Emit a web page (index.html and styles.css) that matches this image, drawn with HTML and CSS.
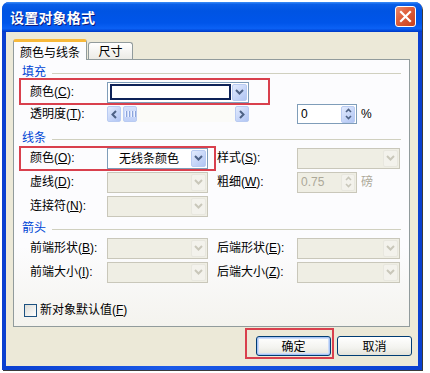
FILE: index.html
```html
<!DOCTYPE html>
<html lang="zh">
<head>
<meta charset="utf-8">
<title>设置对象格式</title>
<link rel="stylesheet" href="styles.css">
</head>
<body>
<div class="stage">
  <div class="window">
    <div class="titlebar">
      <span class="title">设置对象格式</span>
      <div class="close">
        <svg width="13" height="13" viewBox="0 0 13 13"><path d="M2 2 L11 11 M11 2 L2 11" stroke="#fff" stroke-width="2.2" stroke-linecap="square"/></svg>
      </div>
    </div>
    <div class="client">
      <div class="tabs">
        <div class="tab active">颜色与线条</div>
        <div class="tab">尺寸</div>
      </div>
      <div class="panel">
        <div class="group"><span>填充</span></div>
        <div class="row">
          <span class="lbl">颜色(<u>C</u>):</span>
          <div class="combo wide">
            <div class="colorbox"></div>
            <div class="dd"><svg width="9" height="6" viewBox="0 0 9 6"><path d="M1 1 L4.5 4.5 L8 1" fill="none" stroke="#4d6185" stroke-width="2"/></svg></div>
          </div>
        </div>
        <div class="row r20">
          <span class="lbl">透明度(<u>T</u>):</span>
          <div class="hscroll">
            <div class="sbtn"><svg width="6" height="9" viewBox="0 0 6 9"><path d="M5 1 L1.5 4.5 L5 8" fill="none" stroke="#4d6185" stroke-width="2"/></svg></div>
            <div class="thumb"><i></i><i></i><i></i><i></i></div>
            <div class="sbtn end"><svg width="6" height="9" viewBox="0 0 6 9"><path d="M1 1 L4.5 4.5 L1 8" fill="none" stroke="#4d6185" stroke-width="2"/></svg></div>
          </div>
          <div class="spin">
            <span class="val">0</span>
            <div class="spinbtns">
              <div class="sb"><svg width="7" height="5" viewBox="0 0 7 5"><path d="M1 4 L3.5 1.5 L6 4" fill="none" stroke="#4d6185" stroke-width="1.6"/></svg></div>
              <div class="sb"><svg width="7" height="5" viewBox="0 0 7 5"><path d="M1 1 L3.5 3.5 L6 1" fill="none" stroke="#4d6185" stroke-width="1.6"/></svg></div>
            </div>
          </div>
          <span class="unit">%</span>
        </div>

        <div class="group g2"><span>线条</span></div>
        <div class="row">
          <span class="lbl">颜色(<u>O</u>):</span>
          <div class="combo">
            <span class="ctext">无线条颜色</span>
            <div class="dd"><svg width="9" height="6" viewBox="0 0 9 6"><path d="M1 1 L4.5 4.5 L8 1" fill="none" stroke="#4d6185" stroke-width="2"/></svg></div>
          </div>
          <span class="lbl2">样式(<u>S</u>):</span>
          <div class="combo dis c2">
            <div class="dd"><svg width="9" height="6" viewBox="0 0 9 6"><path d="M1 1 L4.5 4.5 L8 1" fill="none" stroke="#c9c7ba" stroke-width="2"/></svg></div>
          </div>
        </div>
        <div class="row">
          <span class="lbl">虚线(<u>D</u>):</span>
          <div class="combo dis">
            <div class="dd"><svg width="9" height="6" viewBox="0 0 9 6"><path d="M1 1 L4.5 4.5 L8 1" fill="none" stroke="#c9c7ba" stroke-width="2"/></svg></div>
          </div>
          <span class="lbl2">粗细(<u>W</u>):</span>
          <div class="spin dis">
            <span class="val">0.75</span>
            <div class="spinbtns">
              <div class="sb"><svg width="7" height="5" viewBox="0 0 7 5"><path d="M1 4 L3.5 1.5 L6 4" fill="none" stroke="#c9c7ba" stroke-width="1.6"/></svg></div>
              <div class="sb"><svg width="7" height="5" viewBox="0 0 7 5"><path d="M1 1 L3.5 3.5 L6 1" fill="none" stroke="#c9c7ba" stroke-width="1.6"/></svg></div>
            </div>
          </div>
          <span class="unit dim">磅</span>
        </div>
        <div class="row">
          <span class="lbl">连接符(<u>N</u>):</span>
          <div class="combo dis">
            <div class="dd"><svg width="9" height="6" viewBox="0 0 9 6"><path d="M1 1 L4.5 4.5 L8 1" fill="none" stroke="#c9c7ba" stroke-width="2"/></svg></div>
          </div>
        </div>

        <div class="group g3"><span>箭头</span></div>
        <div class="row">
          <span class="lbl">前端形状(<u>B</u>):</span>
          <div class="combo dis">
            <div class="dd"><svg width="9" height="6" viewBox="0 0 9 6"><path d="M1 1 L4.5 4.5 L8 1" fill="none" stroke="#c9c7ba" stroke-width="2"/></svg></div>
          </div>
          <span class="lbl2">后端形状(<u>E</u>):</span>
          <div class="combo dis c2">
            <div class="dd"><svg width="9" height="6" viewBox="0 0 9 6"><path d="M1 1 L4.5 4.5 L8 1" fill="none" stroke="#c9c7ba" stroke-width="2"/></svg></div>
          </div>
        </div>
        <div class="row">
          <span class="lbl">前端大小(<u>I</u>):</span>
          <div class="combo dis">
            <div class="dd"><svg width="9" height="6" viewBox="0 0 9 6"><path d="M1 1 L4.5 4.5 L8 1" fill="none" stroke="#c9c7ba" stroke-width="2"/></svg></div>
          </div>
          <span class="lbl2">后端大小(<u>Z</u>):</span>
          <div class="combo dis c2">
            <div class="dd"><svg width="9" height="6" viewBox="0 0 9 6"><path d="M1 1 L4.5 4.5 L8 1" fill="none" stroke="#c9c7ba" stroke-width="2"/></svg></div>
          </div>
        </div>

        <div class="check">
          <span class="box"></span>
          <span>新对象默认值(<u>F</u>)</span>
        </div>
      </div>
      <div class="buttons">
        <div class="btn default">确定</div>
        <div class="btn">取消</div>
      </div>
    </div>
  </div>
  <div class="mark m1"></div>
  <div class="mark m2"></div>
  <div class="mark m3"></div>
</div>
</body>
</html>
```
FILE: styles.css
```css
html, body {
  margin: 0;
  padding: 0;
  background: #ffffff;
}
body {
  font-family: "Liberation Sans", "Noto Sans CJK SC", sans-serif;
  font-size: 12px;
  line-height: 14px;
  color: #000;
}
.stage {
  position: relative;
  width: 430px;
  height: 373px;
  overflow: hidden;
}
.window {
  margin: 2px 0 0 2px;
  width: 420px;
  height: 368px;
  box-sizing: border-box;
  border-radius: 7px 7px 0 0;
  background: #0842d4;
  box-shadow: 1px 1px 0 #3a3a3a;
  display: flex;
  flex-direction: column;
  padding: 0 4px 4px 4px;
  background: linear-gradient(to right, #0a3fd0, #1b5ae8 40%, #0a3fd0);
}
.titlebar {
  height: 30px;
  margin: 0 -4px;
  border-radius: 7px 7px 0 0;
  background: linear-gradient(#3c8ef8 0%, #0a5ee8 8%, #0054e3 30%, #0055ea 70%, #0b61f5 88%, #0046d8 96%, #0037c4 100%);
  display: flex;
  align-items: center;
  padding: 0 6px 0 8px;
}
.title {
  font-family: "Noto Sans CJK SC", sans-serif;
  font-weight: bold;
  font-size: 14px;
  color: #fff;
  text-shadow: 1px 1px 0 #0a1a80;
  letter-spacing: 0.2px;
}
.close {
  margin-left: auto;
  width: 19px;
  height: 19px;
  border: 1px solid #fff;
  border-radius: 3px;
  background: linear-gradient(135deg, #eb8a6e 0%, #e0603d 40%, #c8401c 100%);
  display: flex;
  align-items: center;
  justify-content: center;
  margin-top: -2px;
}
.client {
  flex: 1;
  background: #ece9d8;
  display: flex;
  flex-direction: column;
}
.tabs {
  display: flex;
  align-items: flex-end;
  height: 20px;
  margin: 7px 0 0 7px;
}
.tab {
  font-family: "Noto Sans CJK SC", sans-serif;
  height: 17px;
  box-sizing: border-box;
  padding: 1px 0 0;
  width: 45px;
  text-align: center;
  border: 1px solid #919b9c;
  border-bottom: none;
  border-radius: 3px 3px 0 0;
  background: linear-gradient(#ffffff, #ecebe6);
  margin-left: 1px;
}
.tab.active {
  position: relative;
  z-index: 1;
  width: 74px;
  height: 21px;
  margin: 0 0 -1px 0;
  padding-top: 3px;
  background: #fcfcfe;
  border-top: 3px solid #f8b93a;
  border-radius: 3px 3px 0 0;
}
.panel {
  margin-left: 7px;
  width: 397px;
  height: 268px;
  box-sizing: border-box;
  border: 1px solid #919b9c;
  background: linear-gradient(#fcfcfe 70%, #f4f3ee 100%);
  padding: 0 8px;
  font-family: "Liberation Sans", "Noto Sans CJK SC", sans-serif;
}
.group {
  margin-top: 4px;
  height: 16px;
  display: flex;
  align-items: center;
  color: #0046d5;
}
.group::after {
  content: "";
  flex: 1;
  height: 1px;
  background: #d0d0bf;
  margin-left: 6px;
  margin-top: 2px;
}
.group.g2 { margin-top: 6px; }
.group.g3 { margin-top: 2px; }
.row {
  height: 24px;
  display: flex;
  align-items: center;
  padding-left: 8px;
}
.row.r20 { height: 20px; }
.lbl {
  width: 77px;
  flex: none;
}
.lbl2 {
  width: 80px;
  margin-left: 9px;
  flex: none;
}
u { text-decoration: underline; }
.combo {
  width: 101px;
  height: 21px;
  box-sizing: border-box;
  border: 1px solid #7f9db9;
  background: #fff;
  display: flex;
  align-items: center;
  flex: none;
}
.combo.wide { width: 142px; }
.combo.c2 { width: 103px; }
.combo.dis {
  border-color: #c9c7ba;
  background: #efeee4;
}
.colorbox {
  width: 121px;
  height: 16px;
  box-sizing: border-box;
  border: 2px solid #0e2358;
  background: #fff;
  margin-left: 2px;
}
.ctext {
  margin-left: 11px;
  font-family: "Noto Sans CJK SC", sans-serif;
}
.dd {
  margin-left: auto;
  margin-right: 1px;
  width: 15px;
  height: 17px;
  box-sizing: border-box;
  border: 1px solid #b9cbf2;
  border-radius: 2px;
  background: linear-gradient(135deg, #e3ebfd 0%, #c4d4f8 60%, #b1c5f3 100%);
  display: flex;
  align-items: center;
  justify-content: center;
}
.dis .dd {
  border-color: #e8e7df;
  background: #f3f2ec;
}
.hscroll {
  width: 142px;
  height: 16px;
  display: flex;
  align-items: center;
  background: #fbfbf8;
  flex: none;
}
.sbtn {
  width: 14px;
  height: 16px;
  box-sizing: border-box;
  border: 1px solid #b9cbf2;
  border-radius: 2px;
  background: linear-gradient(135deg, #e3ebfd 0%, #c4d4f8 60%, #b1c5f3 100%);
  display: flex;
  align-items: center;
  justify-content: center;
}
.sbtn.end { margin-left: auto; }
.thumb {
  width: 14px;
  height: 16px;
  margin-left: 2px;
  box-sizing: border-box;
  border: 1px solid #b9cbf2;
  border-radius: 2px;
  background: linear-gradient(#d5e1fc, #bfd0f7);
  display: flex;
  align-items: center;
  justify-content: center;
  gap: 1px;
}
.thumb i {
  width: 1px;
  height: 6px;
  background: #eef3fe;
  border-right: 1px solid #8ca5db;
}
.spin {
  margin-left: 48px;
  width: 60px;
  height: 20px;
  box-sizing: border-box;
  border: 1px solid #7f9db9;
  background: #fff;
  display: flex;
  align-items: center;
  flex: none;
}
.lbl2 + .spin { margin-left: 0; height: 21px; }
.spin .val {
  margin-left: 3px;
  font-family: "Liberation Sans", sans-serif;
}
.spin.dis {
  border-color: #c9c7ba;
  background: #efeee4;
}
.spin.dis .val { color: #aca899; }
.spinbtns {
  margin-left: auto;
  margin-right: 1px;
  width: 14px;
  height: 17px;
  display: flex;
  flex-direction: column;
  border-radius: 2px;
  background: linear-gradient(135deg, #e3ebfd 0%, #c4d4f8 60%, #b1c5f3 100%);
  border: 1px solid #b9cbf2;
  box-sizing: border-box;
}
.spin.dis .spinbtns {
  background: #f3f2ec;
  border-color: #e8e7df;
}
.sb {
  flex: 1;
  display: flex;
  align-items: center;
  justify-content: center;
}
.unit {
  margin-left: 4px;
  font-family: "Liberation Sans", "Noto Sans CJK SC", sans-serif;
}
.unit.dim { color: #aca899; }
.check {
  margin-top: 19px;
  height: 14px;
  margin-left: 2px;
  display: flex;
  align-items: center;
  gap: 3px;
}
.check .box {
  width: 13px;
  height: 13px;
  box-sizing: border-box;
  border: 1px solid #1c5180;
  background: linear-gradient(135deg, #dcdcd7, #ffffff);
}
.buttons {
  display: flex;
  justify-content: flex-end;
  gap: 6px;
  margin-top: 9px;
  padding-right: 6px;
}
.btn {
  width: 75px;
  height: 20px;
  box-sizing: border-box;
  border: 1px solid #003c74;
  border-radius: 3px;
  background: linear-gradient(#ffffff 0%, #f3f3ef 60%, #e3e2da 100%);
  display: flex;
  align-items: center;
  justify-content: center;
  font-family: "Noto Sans CJK SC", sans-serif;
}
.btn.default {
  box-shadow: inset 0 0 0 1px #a9c5f5, inset 0 0 0 2px #cddcf8;
}
.mark {
  position: absolute;
  border: 2px solid #d9404d;
  box-sizing: border-box;
}
.m1 { left: 19px; top: 78px; width: 251px; height: 27px; }
.m2 { left: 19px; top: 146px; width: 197px; height: 25px; }
.m3 { left: 245px; top: 328px; width: 89px; height: 31px; }
```
